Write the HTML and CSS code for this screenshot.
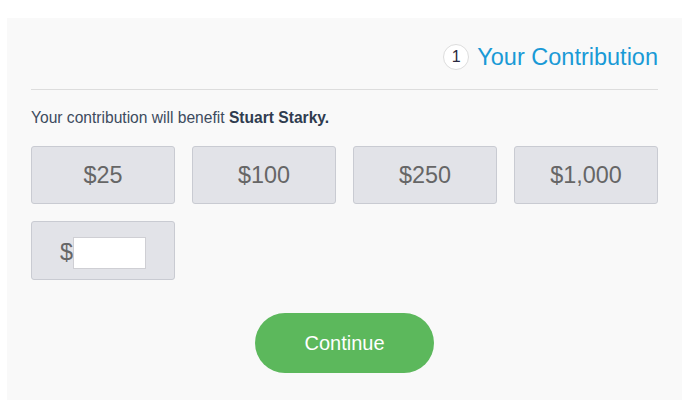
FILE: index.html
```html
<!DOCTYPE html>
<html>
<head>
<meta charset="utf-8">
<link rel="stylesheet" href="styles.css">
</head>
<body>
<div class="panel">
  <div class="header">
    <span class="step">1</span>
    <h2 class="title">Your Contribution</h2>
  </div>
  <p class="benefit">Your contribution will benefit <strong>Stuart Starky.</strong></p>
  <div class="amounts">
    <button class="amount">$25</button>
    <button class="amount">$100</button>
    <button class="amount">$250</button>
    <button class="amount">$1,000</button>
    <label class="amount custom"><span>$</span><input type="text" class="custom-input"></label>
  </div>
  <div class="actions">
    <button class="continue">Continue</button>
  </div>
</div>
</body>
</html>
```
FILE: styles.css
```css
html, body {
  margin: 0;
  padding: 0;
  background: #ffffff;
  font-family: "Liberation Sans", Arial, sans-serif;
}
.panel {
  margin: 18px 9px 0 7px;
  background: #f9f9f9;
  padding: 24px 24px 40px 24px;
  height: 400px;
  box-sizing: border-box;
}
.header {
  display: flex;
  justify-content: flex-end;
  align-items: center;
  gap: 8px;
  height: 30px;
  padding-bottom: 17px;
  border-bottom: 1px solid #dddddd;
}
.step {
  width: 24px;
  height: 24px;
  border: 1px solid #dddddd;
  border-radius: 50%;
  background: #ffffff;
  color: #2a2a40;
  font-size: 16px;
  display: flex;
  align-items: center;
  justify-content: center;
}
.title {
  margin: 0;
  font-weight: normal;
  font-size: 23.5px;
  color: #1a9ad6;
}
.benefit {
  margin: 18px 0 0 0;
  font-size: 15.6px;
  line-height: 20px;
  color: #3d4b5e;
}
.benefit strong {
  color: #2f3c4f;
}
.amounts {
  margin-top: 18px;
  display: grid;
  grid-template-columns: repeat(4, 1fr);
  gap: 17px;
}
.amount {
  height: 58px;
  box-sizing: border-box;
  background: #e2e3e8;
  border: 1px solid #c9cbd2;
  border-radius: 3px;
  font-family: "Liberation Sans", Arial, sans-serif;
  font-size: 23.4px;
  color: #666666;
  display: flex;
  align-items: center;
  justify-content: center;
  padding: 0;
}
.custom {
  gap: 0;
  height: 59px;
  padding-top: 4px;
}
.custom-input {
  width: 73px;
  height: 32px;
  box-sizing: border-box;
  border: 1px solid #cfcfd4;
  background: #ffffff;
  padding: 0;
  margin: 0;
}
.actions {
  display: flex;
  justify-content: center;
  margin-top: 33px;
}
.continue {
  width: 179px;
  height: 60px;
  border: none;
  border-radius: 30px;
  background: #5cb85c;
  color: #ffffff;
  font-family: "Liberation Sans", Arial, sans-serif;
  font-size: 20px;
}
```
